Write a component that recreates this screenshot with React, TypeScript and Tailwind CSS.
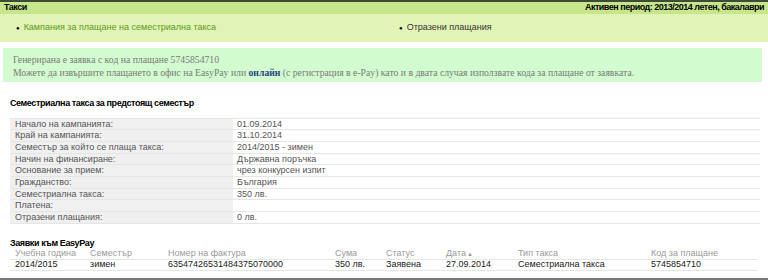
const details: [string, string][] = [
  ["Начало на кампанията:", "01.09.2014"],
  ["Край на кампанията:", "31.10.2014"],
  ["Семестър за който се плаща такса:", "2014/2015 - зимен"],
  ["Начин на финансиране:", "Държавна поръчка"],
  ["Основание за прием:", "чрез конкурсен изпит"],
  ["Гражданство:", "България"],
  ["Семестриална такса:", "350 лв."],
  ["Платена:", ""],
  ["Отразени плащания:", "0 лв."],
];

const cols = [
  { label: "Учебна година", value: "2014/2015", w: "w-[75px]" },
  { label: "Семестър", value: "зимен", w: "w-[78px]" },
  { label: "Номер на фактура", value: "63547426531484375070000", w: "w-[167px]" },
  { label: "Сума", value: "350 лв.", w: "w-[51px]" },
  { label: "Статус", value: "Заявена", w: "w-[60px]" },
  { label: "Дата", value: "27.09.2014", w: "w-[72px]", sort: true },
  { label: "Тип такса", value: "Семестриална такса", w: "w-[133px]" },
  { label: "Код за плащане", value: "5745854710", w: "flex-1" },
];

export default function App() {
  return (
    <div className="w-[768px] h-[280px] overflow-hidden bg-white font-['Liberation_Sans',Arial,sans-serif] text-[9px]">
      {/* title bar */}
      <div className="border-t-2 border-[#3f4b35] bg-[#c6e68c] h-[14px] flex items-center justify-between px-[4px] font-bold text-[9px] tracking-[-0.5px] text-black">
        <span>Такси</span>
        <span>Активен период: 2013/2014 летен, бакалаври</span>
      </div>
      <div className="bg-[#e2f3b6] h-[28px] flex items-center">
        <ul className="flex w-full">
          <li className="w-[399px] pl-[16px] flex items-center gap-[4px] text-[#5e9a24]">
            <span className="text-black text-[6px]">●</span>
            Кампания за плащане на семестриална такса
          </li>
          <li className="flex items-center gap-[4px] text-[#333]">
            <span className="text-black text-[6px]">●</span>
            Отразени плащания
          </li>
        </ul>
      </div>

      {/* info box */}
      <div className="mt-[6px] mx-[3px] mr-[6px] h-[34px] bg-[#d3fbd0] pl-[10px] pt-[5px] font-['Liberation_Serif','Times_New_Roman',serif] text-[9.7px] leading-[13px] text-[#7a7a7a]">
        <div>Генерирана е заявка с код на плащане 5745854710</div>
        <div>
          Можете да извършите плащането в офис на EasyPay или{" "}
          <span className="font-bold text-[#27437f]">онлайн</span> (с регистрация в e-Pay) като и в двата случая
          използвате кода за плащане от заявката.
        </div>
      </div>

      {/* semester fee */}
      <div className="mt-[15px] pl-[10px] font-bold text-[9px] tracking-[-0.4px] text-black">
        Семестриална такса за предстоящ семестър
      </div>
      <div className="mt-[7px] ml-[10px] w-[750px] border-t border-[#e6e6e6]">
        {details.map(([k, v]) => (
          <div key={k} className="flex h-[11.7px] border-b border-[#e6e6e6] text-[#555] leading-[11px]">
            <div className="w-[223px] bg-[#f0f0f0] pl-[5px]">{k}</div>
            <div className="flex-1 pl-[4px]">{v}</div>
          </div>
        ))}
      </div>

      {/* easypay */}
      <div className="mt-[14px] pl-[10px] font-bold text-[9px] leading-[11px] tracking-[-0.4px] text-black">
        Заявки към EasyPay
      </div>
      <div className="ml-[10px] w-[747px]">
        <div className="flex h-[10px] items-center text-[#9a9a9a] pl-[5px]">
          {cols.map((c) => (
            <div key={c.label} className={c.w}>
              {c.label}
              {c.sort && <span className="text-[6px] ml-[1px]">▲</span>}
            </div>
          ))}
        </div>
        <div className="flex h-[12px] items-center text-[#222] pl-[5px] border-y border-[#e6e6e6]">
          {cols.map((c) => (
            <div key={c.label} className={c.w}>
              {c.value}
            </div>
          ))}
        </div>
      </div>
      <div className="mt-[7px] h-[2px] bg-[#777]" />
    </div>
  );
}
